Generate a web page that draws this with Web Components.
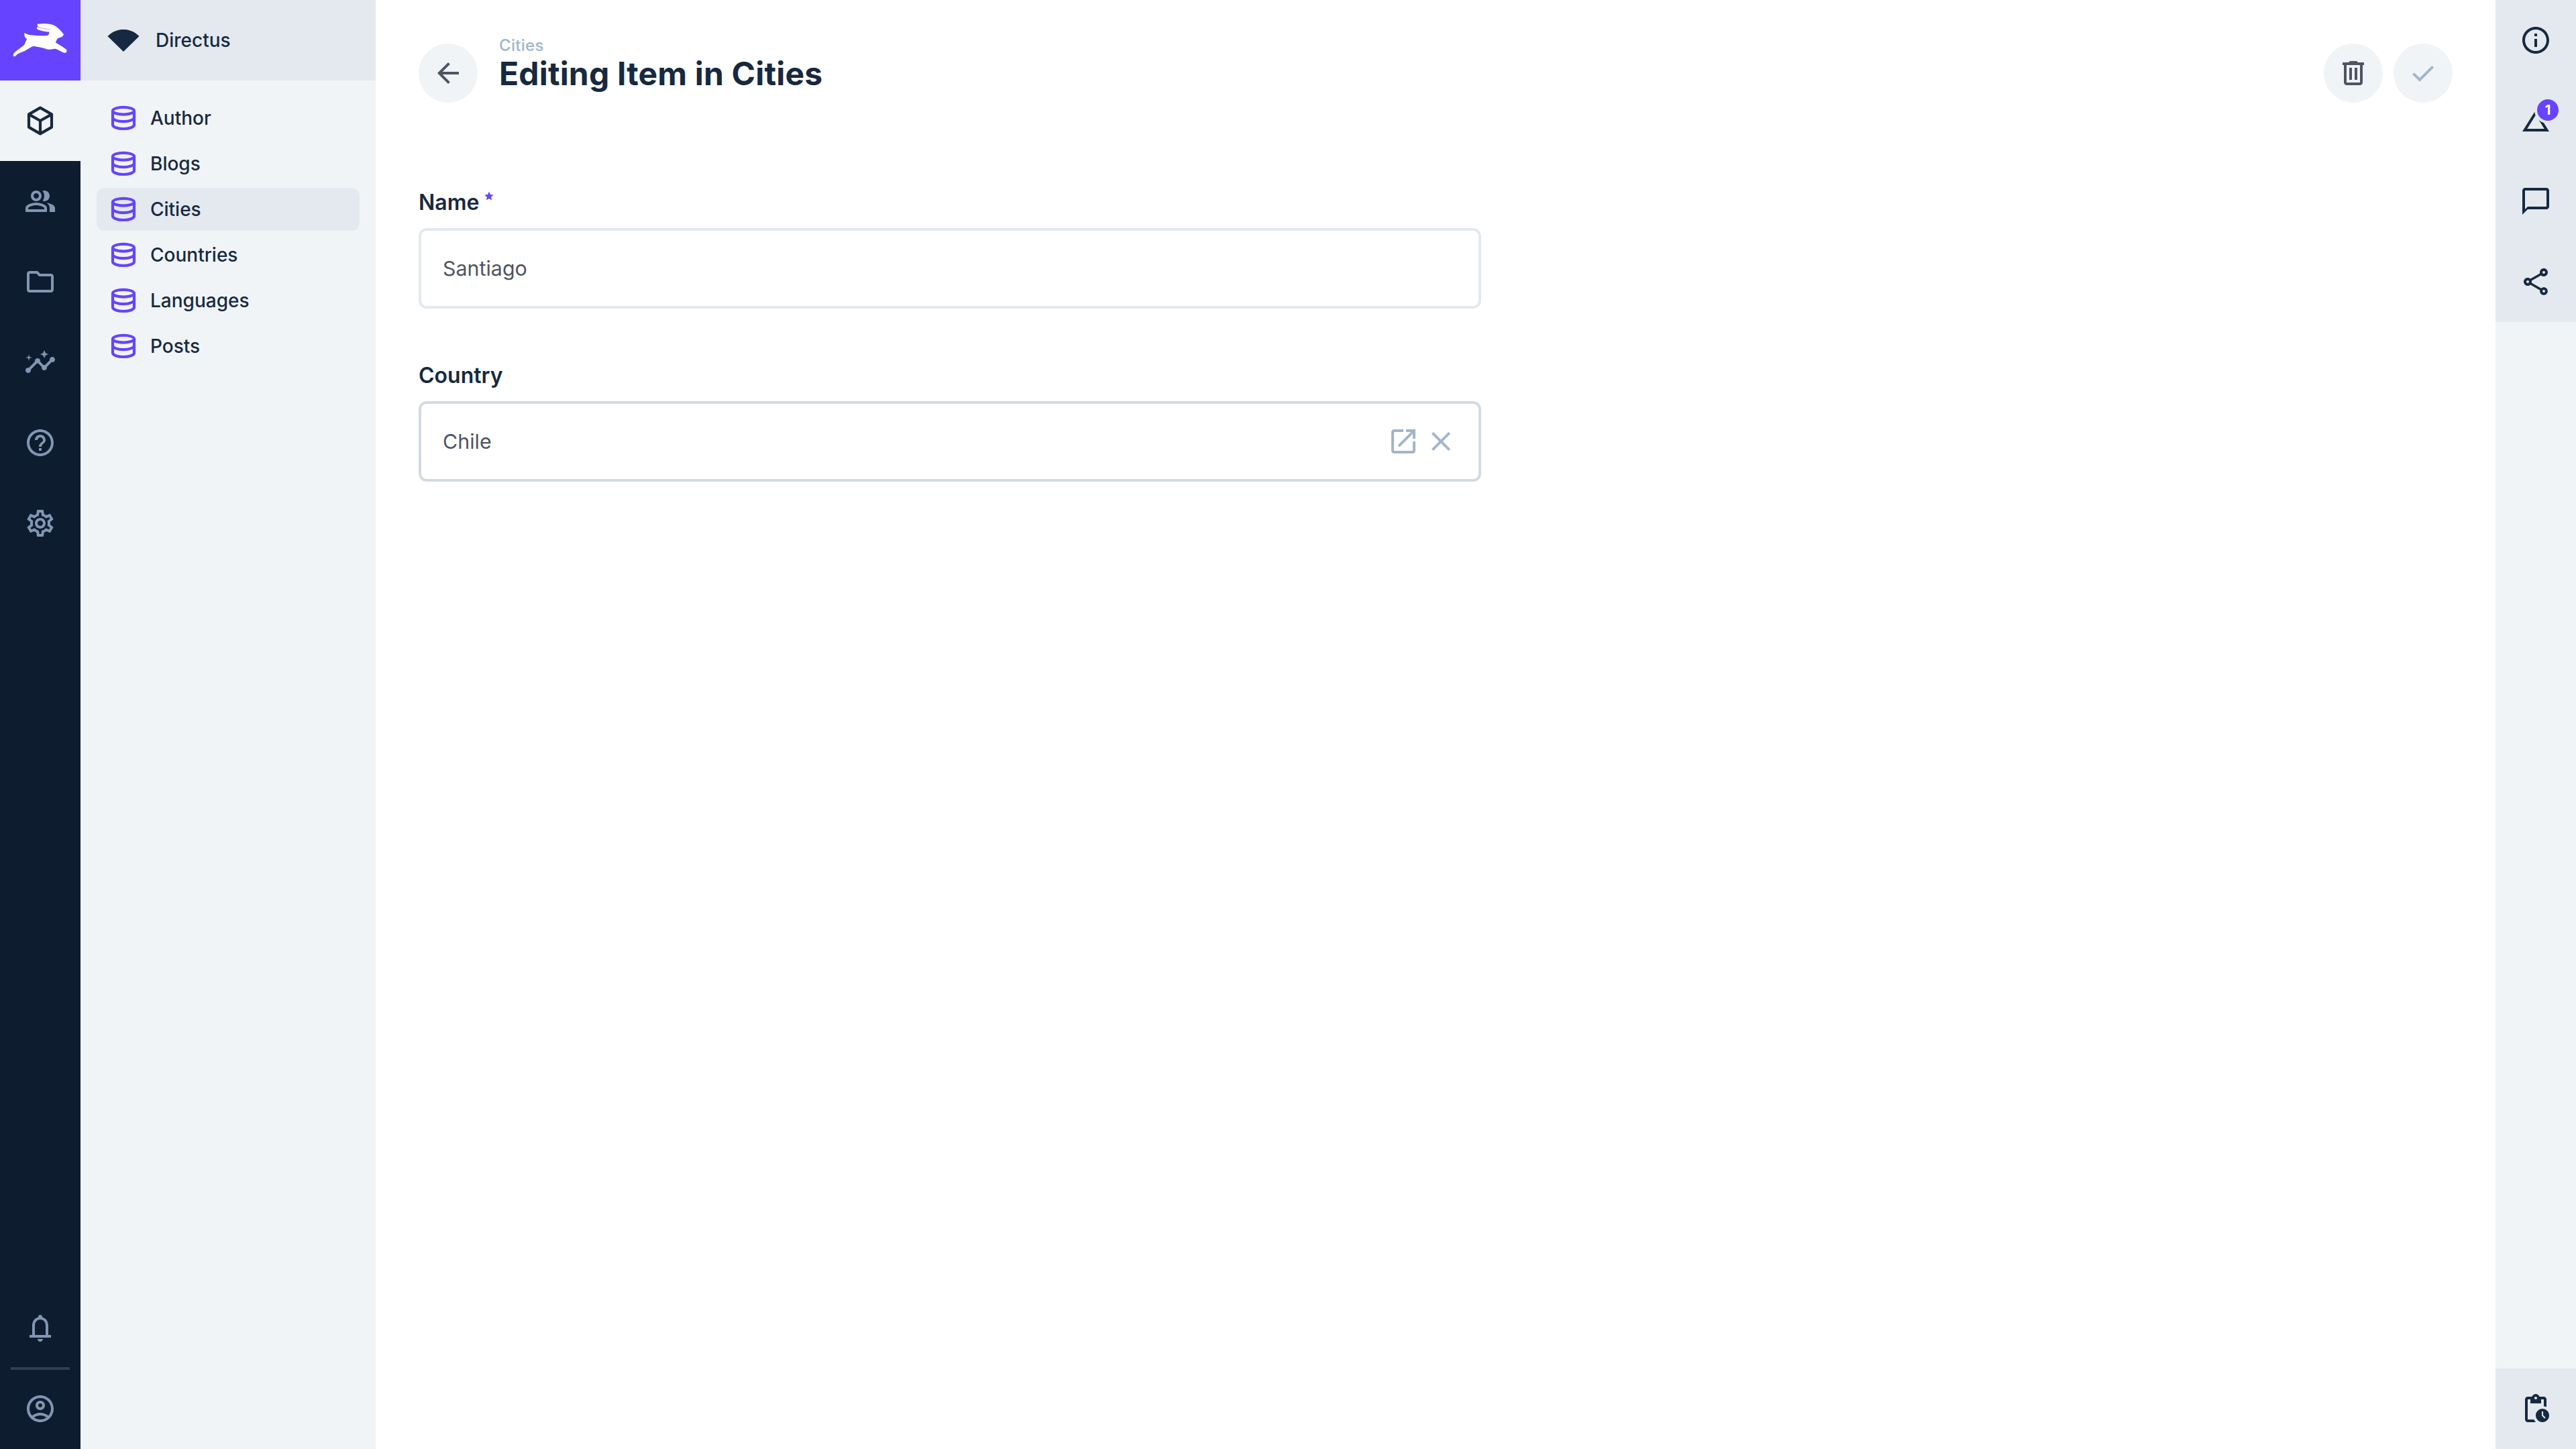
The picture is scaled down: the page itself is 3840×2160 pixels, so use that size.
<!doctype html>
<html lang="en">
<head>
<meta charset="utf-8">
<title>Editing Item in Cities</title>
<style>
  html, body { margin: 0; height: 100%; }
  body { font-family: Inter, "Noto Sans", sans-serif; color: #172940; background: #fff; }
</style>
</head>
<body>
<dx-app></dx-app>
<script>
const ICONS = {
  cube: '<path fill="none" stroke="currentColor" stroke-width="2.1" stroke-linejoin="round" d="M12 2.300 20.500 7.200v9.600L12 21.700 3.500 16.800V7.200zM3.500 7.200 12 12l8.500-4.800M12 12v9.700"/>',
  people: '<path d="M16.67 13.13C18.04 14.06 19 15.32 19 17v3h4v-3c0-2.18-3.57-3.47-6.33-3.87zM15 12c2.21 0 4-1.79 4-4s-1.79-4-4-4c-.47 0-.91.1-1.33.24C14.5 5.27 15 6.58 15 8s-.5 2.73-1.33 3.76c.42.14.86.24 1.33.24zM9 12c2.21 0 4-1.79 4-4s-1.79-4-4-4-4 1.79-4 4 1.79 4 4 4zm0-6c1.1 0 2 .9 2 2s-.9 2-2 2-2-.9-2-2 .9-2 2-2zM9 13c-2.67 0-8 1.34-8 4v3h16v-3c0-2.66-5.33-4-8-4zm6 5H3v-.99C3.2 16.29 6.3 15 9 15s5.8 1.29 6 2v1z"/>',
  folder: '<path d="M9.17 6l2 2H20v10H4V6h5.17M10 4H4c-1.1 0-1.99.9-1.99 2L2 18c0 1.1.9 2 2 2h16c1.1 0 2-.9 2-2V8c0-1.1-.9-2-2-2h-8l-2-2z"/>',
  insights: '<path d="M21 8c-1.45 0-2.26 1.44-1.93 2.51l-3.55 3.56c-.3-.09-.74-.09-1.04 0l-2.55-2.55C12.27 10.45 11.46 9 10 9c-1.45 0-2.27 1.44-1.93 2.52l-4.56 4.55C2.44 15.74 1 16.55 1 18c0 1.1.9 2 2 2 1.45 0 2.26-1.44 1.93-2.51l4.55-4.56c.3.09.74.09 1.04 0l2.55 2.55C12.73 16.55 13.54 18 15 18c1.45 0 2.27-1.44 1.93-2.52l3.56-3.55c1.07.33 2.51-.48 2.51-1.93 0-1.1-.9-2-2-2zM15 9l.94-2.07L18 6l-2.06-.93L15 3l-.92 2.07L12 6l2.08.93zM3.5 11 4 9l2-.5L4 8l-.5-2L3 8l-2 .5L3 9z"/>',
  help: '<path d="M11 18h2v-2h-2v2zm1-16C6.48 2 2 6.48 2 12s4.48 10 10 10 10-4.48 10-10S17.52 2 12 2zm0 18c-4.41 0-8-3.59-8-8s3.59-8 8-8 8 3.59 8 8-3.59 8-8 8zm0-14c-2.21 0-4 1.79-4 4h2c0-1.1.9-2 2-2s2 .9 2 2c0 2-3 1.75-3 5h2c0-2.25 3-2.5 3-5 0-2.21-1.79-4-4-4z"/>',
  settings: '<path d="M19.43 12.98c.04-.32.07-.64.07-.98 0-.34-.03-.66-.07-.98l2.11-1.65c.19-.15.24-.42.12-.64l-2-3.46c-.09-.16-.26-.25-.44-.25-.06 0-.12.01-.17.03l-2.49 1c-.52-.4-1.08-.73-1.69-.98l-.38-2.65C14.46 2.18 14.25 2 14 2h-4c-.25 0-.46.18-.49.42l-.38 2.65c-.61.25-1.17.59-1.69.98l-2.49-1c-.06-.02-.12-.03-.18-.03-.17 0-.34.09-.43.25l-2 3.46c-.13.22-.07.49.12.64l2.11 1.65c-.04.32-.07.65-.07.98 0 .33.03.66.07.98l-2.11 1.65c-.19.15-.24.42-.12.64l2 3.46c.09.16.26.25.44.25.06 0 .12-.01.17-.03l2.49-1c.52.4 1.08.73 1.69.98l.38 2.65c.03.24.24.42.49.42h4c.25 0 .46-.18.49-.42l.38-2.65c.61-.25 1.17-.59 1.69-.98l2.49 1c.06.02.12.03.18.03.17 0 .34-.09.43-.25l2-3.46c.12-.22.07-.49-.12-.64l-2.11-1.65zm-1.98-1.71c.04.31.05.52.05.73 0 .21-.02.43-.05.73l-.14 1.13.89.7 1.08.84-.7 1.21-1.27-.51-1.04-.42-.9.68c-.43.32-.84.56-1.25.73l-1.06.43-.16 1.13-.2 1.35h-1.4l-.19-1.35-.16-1.13-1.06-.43c-.43-.18-.83-.41-1.23-.71l-.91-.7-1.06.43-1.27.51-.7-1.21 1.08-.84.89-.7-.14-1.13c-.03-.31-.05-.54-.05-.74s.02-.43.05-.73l.14-1.13-.89-.7-1.08-.84.7-1.21 1.27.51 1.04.42.9-.68c.43-.32.84-.56 1.25-.73l1.06-.43.16-1.13.2-1.35h1.39l.19 1.35.16 1.13 1.06.43c.43.18.83.41 1.23.71l.91.7 1.06-.43 1.27-.51.7 1.21-1.07.85-.89.7.14 1.13zM12 8c-2.21 0-4 1.79-4 4s1.79 4 4 4 4-1.79 4-4-1.79-4-4-4zm0 6c-1.1 0-2-.9-2-2s.9-2 2-2 2 .9 2 2-.9 2-2 2z"/>',
  bell: '<path fill-rule="evenodd" d="M12 2c-.8 0-1.5.6-1.5 1.4v.4C7.7 4.5 6 7 6 10v7H4v2h16v-2h-2v-7c0-3-1.7-5.5-4.5-6.2v-.4C13.5 2.6 12.8 2 12 2zM8 17v-7c0-2.5 1.5-4.5 4-4.5s4 2 4 4.5v7H8z"/><path d="M10 20h4c0 1.1-.9 2-2 2s-2-.9-2-2z"/>',
  user: '<path d="M12 2C6.48 2 2 6.48 2 12s4.48 10 10 10 10-4.48 10-10S17.52 2 12 2zM7.35 18.5C8.66 17.56 10.26 17 12 17s3.34.56 4.65 1.5c-1.31.94-2.91 1.5-4.65 1.5s-3.34-.56-4.65-1.5zm10.79-1.38C16.45 15.8 14.32 15 12 15s-4.45.8-6.14 2.12C4.7 15.73 4 13.95 4 12c0-4.42 3.58-8 8-8s8 3.58 8 8c0 1.95-.7 3.73-1.86 5.12zM12 6c-1.93 0-3.5 1.57-3.5 3.5S10.07 13 12 13s3.5-1.57 3.5-3.5S13.93 6 12 6zm0 5c-.83 0-1.5-.67-1.5-1.5S11.17 8 12 8s1.5.67 1.5 1.5S12.83 11 12 11z"/>',
  database: '<g fill="none" stroke="currentColor" stroke-width="2.1"><ellipse cx="12" cy="6.600" rx="8" ry="2.700"/><path d="M4 6.600V17c0 1.700 3.600 3 8 3s8-1.300 8-3V6.600M4 11.500c0 1.700 3.600 3.100 8 3.100s8-1.400 8-3.100"/></g>',
  back: '<path d="M20 11H7.83l5.59-5.59L12 4l-8 8 8 8 1.41-1.41L7.83 13H20v-2z"/>',
  trash: '<path fill-rule="evenodd" d="M9.500 3h5l1 1H20v2h-1v13c0 1.100-.9 2-2 2H7c-1.100 0-2-.9-2-2V6H4V4h4.500zM7 6v13h10V6H7z"/><path d="M9 8h2v9H9zM13 8h2v9h-2z"/>',
  check: '<path fill="none" stroke="currentColor" stroke-width="2" d="M4.700 12.300 9.500 17 19.300 7.200"/>',
  open: '<path d="M19 19H5V5h7V3H5c-1.110 0-2 .9-2 2v14c0 1.100.89 2 2 2h14c1.100 0 2-.9 2-2v-7h-2v7zM14 3v2h3.590l-9.830 9.830 1.410 1.410L19 6.410V10h2V3h-7z"/>',
  close: '<path d="M19 6.410 17.590 5 12 10.590 6.410 5 5 6.410 10.590 12 5 17.590 6.410 19 12 13.410 17.590 19 19 17.590 13.410 12z"/>',
  info: '<path d="M11 7h2v2h-2zm0 4h2v6h-2zm1-9C6.480 2 2 6.480 2 12s4.480 10 10 10 10-4.480 10-10S17.520 2 12 2zm0 18c-4.410 0-8-3.590-8-8s3.590-8 8-8 8 3.590 8 8-3.590 8-8 8z"/>',
  history: '<path d="M12 7.770 18.390 18H5.610L12 7.770M12 4 2 20h20L12 4z"/>',
  chat: '<path d="M20 2H4c-1.100 0-2 .9-2 2v18l4-4h14c1.100 0 2-.9 2-2V4c0-1.100-.9-2-2-2zm0 14H6l-2 2V4h16v12z"/>',
  share: '<path d="M18 16.080c-.76 0-1.440.3-1.960.77L8.910 12.700c.05-.23.09-.46.09-.7s-.04-.47-.09-.7l7.050-4.110c.54.5 1.250.81 2.040.81 1.660 0 3-1.340 3-3s-1.340-3-3-3-3 1.340-3 3c0 .24.04.47.09.7L8.040 9.810C7.500 9.310 6.790 9 6 9c-1.660 0-3 1.340-3 3s1.340 3 3 3c.79 0 1.500-.31 2.040-.81l7.120 4.160c-.05.21-.08.43-.08.65 0 1.610 1.310 2.920 2.920 2.920 1.610 0 2.920-1.310 2.920-2.920s-1.310-2.920-2.920-2.920zM18 4c.55 0 1 .45 1 1s-.45 1-1 1-1-.45-1-1 .45-1 1-1zM6 13c-.55 0-1-.45-1-1s.45-1 1-1 1 .45 1 1-.45 1-1 1zm12 7.020c-.55 0-1-.45-1-1s.45-1 1-1 1 .45 1 1-.45 1-1 1z"/>',
  pending: '<path d="M17 12c-2.760 0-5 2.240-5 5s2.240 5 5 5 5-2.240 5-5-2.240-5-5-5zm1.650 7.350L16.500 17.200V14h1v2.790l1.850 1.850-.7.71zM18 3h-3.180C14.400 1.840 13.300 1 12 1s-2.400.84-2.820 2H6c-1.100 0-2 .9-2 2v15c0 1.100.9 2 2 2h6.110c-.59-.57-1.070-1.250-1.420-2H6V5h2v3h8V5h2v5.080c.71.1 1.380.31 2 .6V5c0-1.100-.9-2-2-2zm-6 2c-.55 0-1-.45-1-1s.45-1 1-1 1 .45 1 1-.45 1-1 1z"/>',
};

class DxIcon extends HTMLElement {
  connectedCallback() {
    this.attachShadow({ mode: 'open' });
    const name = this.getAttribute('name');
    this.shadowRoot.innerHTML = `
      <style>
        :host { display: block; width: 48px; height: 48px; flex: none; }
        svg { display: block; width: 100%; height: 100%; fill: currentColor; }
      </style>
      <svg viewBox="0 0 24 24" aria-hidden="true">${ICONS[name] || ''}</svg>
    `;
  }
}
customElements.define('dx-icon', DxIcon);

class DxModuleItem extends HTMLElement {
  connectedCallback() {
    this.attachShadow({ mode: 'open' });
    this.shadowRoot.innerHTML = `
      <style>
        :host { display: flex; width: 120px; height: 120px; align-items: center; justify-content: center; color: #8196b1; }
        :host([active]) { background: #f0f4f7; color: #172940; }
      </style>
      <dx-icon name="${this.getAttribute('icon')}"></dx-icon>
    `;
  }
}
customElements.define('dx-module-item', DxModuleItem);

class DxModuleBar extends HTMLElement {
  connectedCallback() {
    this.attachShadow({ mode: 'open' });
    this.shadowRoot.innerHTML = `
      <style>
        :host { display: flex; flex-direction: column; height: 100%; background: #0e1c2f; }
        .logo { height: 120px; background: #6644ff; flex: none; }
        .logo svg { display: block; width: 120px; height: 120px; }
        .spacer { flex: 1; }
        .rule { height: 4px; margin: -2px 16px; background: #2f3f58; position: relative; }
      </style>
      <div class="logo">
        <svg viewBox="0 0 120 120" aria-hidden="true">
          <path fill="#fff" stroke="#fff" stroke-width="1.400" stroke-linejoin="round" d="M20.500 83C19.500 81 21 79.500 24 77L32 71C36 69 38 66 39 62L41 58C38 56 36.500 54 37 50C39 51 42 53 46 53C55 54 64 54.500 71 53.500C73 53 74 50 74.500 47C69 47 58 45 55.500 42.500C55 41 57 40.500 59 41C57 39 55.500 37.500 56.500 36.500C62 35.500 72 35.500 78 37.500C85 40 90 46 94 51C94.500 53 92 55 88 55.500C86 56 85 57 84 59C83 61 82 63 82.500 64C86 66 93 70 98 74C100 76 98.500 78.500 96 78C91 76.500 87 73 83 72C79 71.500 76 73.500 72 73C69 73 68 71.500 65 71C60 70 55 68.500 50 68C46 69 41 73 37 75C33 77 28 78 24.500 81C23 83 21.500 84 20.500 83Z"/>
          <path fill="none" stroke="#b9a8ff" stroke-width="1" d="M57 41C63 42 69 43.500 75 44"/>
        </svg>
      </div>
      <dx-module-item icon="cube" active></dx-module-item>
      <dx-module-item icon="people"></dx-module-item>
      <dx-module-item icon="folder"></dx-module-item>
      <dx-module-item icon="insights"></dx-module-item>
      <dx-module-item icon="help"></dx-module-item>
      <dx-module-item icon="settings"></dx-module-item>
      <div class="spacer"></div>
      <dx-module-item icon="bell"></dx-module-item>
      <div class="rule"></div>
      <dx-module-item icon="user"></dx-module-item>
    `;
  }
}
customElements.define('dx-module-bar', DxModuleBar);

class DxNavItem extends HTMLElement {
  connectedCallback() {
    this.attachShadow({ mode: 'open' });
    this.shadowRoot.innerHTML = `
      <style>
        :host { display: flex; align-items: center; height: 64px; padding: 0 16px; gap: 16px; border-radius: 12px; color: #172940; font-size: 28px; font-weight: 500; }
        :host([active]) { background: #e3e9ef; }
        dx-icon { color: #6644ff; }
      </style>
      <dx-icon name="database"></dx-icon>
      <slot></slot>
    `;
  }
}
customElements.define('dx-nav-item', DxNavItem);

class DxNavSidebar extends HTMLElement {
  connectedCallback() {
    this.attachShadow({ mode: 'open' });
    this.shadowRoot.innerHTML = `
      <style>
        :host { display: flex; flex-direction: column; height: 100%; background: #f0f4f7; }
        header { display: flex; align-items: center; height: 120px; flex: none; padding-left: 40px; gap: 24px; background: #e3e9ef; font-size: 28px; font-weight: 500; color: #172940; }
        svg { display: block; width: 48px; height: 48px; flex: none; }
        nav { display: flex; flex-direction: column; gap: 4px; padding: 24px; }
      </style>
      <header>
        <svg viewBox="0 0 48 48" aria-hidden="true"><path fill="#172940" d="M.5 18C8 10.500 16 8 24 8s16 2.500 23.500 10L24 41Z"/></svg>
        <span>Directus</span>
      </header>
      <nav><slot></slot></nav>
    `;
  }
}
customElements.define('dx-nav-sidebar', DxNavSidebar);

class DxRoundButton extends HTMLElement {
  connectedCallback() {
    this.attachShadow({ mode: 'open' });
    this.shadowRoot.innerHTML = `
      <style>
        :host { display: flex; width: 88px; height: 88px; flex: none; align-items: center; justify-content: center; border-radius: 50%; background: #f0f4f7; color: #4f5464; }
        :host([disabled]) { color: #a2b5cd; }
      </style>
      <dx-icon name="${this.getAttribute('icon')}"></dx-icon>
    `;
  }
}
customElements.define('dx-round-button', DxRoundButton);

class DxHeaderBar extends HTMLElement {
  connectedCallback() {
    this.attachShadow({ mode: 'open' });
    this.shadowRoot.innerHTML = `
      <style>
        :host { display: flex; align-items: flex-start; padding: 65px 64px 0; }
        .titles { margin: -11px 0 0 32px; flex: 1; }
        .crumb { font-size: 24px; line-height: 28px; color: #a2b5cd; font-weight: 500; letter-spacing: .3px; }
        h1 { margin: 0; font-size: 48px; line-height: 56px; font-weight: 700; color: #172940; letter-spacing: .17px; }
        .actions { display: flex; gap: 16px; }
      </style>
      <dx-round-button icon="back"></dx-round-button>
      <div class="titles">
        <div class="crumb">${this.getAttribute('crumb')}</div>
        <h1>${this.getAttribute('heading')}</h1>
      </div>
      <div class="actions"><slot></slot></div>
    `;
  }
}
customElements.define('dx-header-bar', DxHeaderBar);

class DxField extends HTMLElement {
  connectedCallback() {
    this.attachShadow({ mode: 'open' });
    const required = this.hasAttribute('required');
    this.shadowRoot.innerHTML = `
      <style>
        :host { display: block; width: 1584px; }
        .label { display: flex; height: 40px; margin-bottom: 18px; font-size: 32px; line-height: 40px; font-weight: 600; color: #172940; }
        .label svg { width: 14px; height: 14px; margin: 3px 0 0 8px; fill: #6644ff; }
        .box { display: flex; align-items: center; gap: 8px; box-sizing: border-box; height: 120px; padding: 0 32px; border: 4px solid #e3e9ef; border-radius: 12px; background: #fff; font-size: 30.400px; color: #4f5464; }
        :host([strong]) .box { border-color: #d3dae4; }
        .value { flex: 1; }
        ::slotted(dx-icon) { color: #a2b5cd; }
      </style>
      <div class="label">
        <span>${this.getAttribute('label')}</span>
        ${required ? '<svg viewBox="0 0 24 24" aria-hidden="true"><path d="M12 1l3.300 7.700 8.300.7-6.300 5.500 1.900 8.100L12 18.700 4.800 23l1.900-8.100L.4 9.400l8.300-.7z"/></svg>' : ''}
      </div>
      <div class="box">
        <span class="value">${this.getAttribute('value')}</span>
        <slot></slot>
      </div>
    `;
  }
}
customElements.define('dx-field', DxField);

class DxInfoSidebar extends HTMLElement {
  connectedCallback() {
    this.attachShadow({ mode: 'open' });
    this.shadowRoot.innerHTML = `
      <style>
        :host { display: flex; flex-direction: column; height: 100%; background: #f0f4f7; color: #172940; }
        .group { background: #e3e9ef; }
        .spacer { flex: 1; }
        .row { display: flex; width: 120px; height: 120px; align-items: center; justify-content: center; position: relative; }
        .badge { position: absolute; left: 62px; top: 28px; width: 32px; height: 32px; border-radius: 50%; background: #6644ff; box-shadow: 0 0 0 4px #e3e9ef; color: #fff; font-size: 20px; font-weight: 700; line-height: 32px; text-align: center; }
      </style>
      <div class="group">
        <div class="row"><dx-icon name="info"></dx-icon></div>
        <div class="row"><dx-icon name="history"></dx-icon><span class="badge">1</span></div>
        <div class="row"><dx-icon name="chat"></dx-icon></div>
        <div class="row"><dx-icon name="share"></dx-icon></div>
      </div>
      <div class="spacer"></div>
      <div class="group">
        <div class="row"><dx-icon name="pending"></dx-icon></div>
      </div>
    `;
  }
}
customElements.define('dx-info-sidebar', DxInfoSidebar);

class DxApp extends HTMLElement {
  connectedCallback() {
    this.attachShadow({ mode: 'open' });
    const collections = ['Author', 'Blogs', 'Cities', 'Countries', 'Languages', 'Posts'];
    this.shadowRoot.innerHTML = `
      <style>
        :host { display: grid; grid-template-columns: 120px 440px 1fr 120px; height: 100vh; overflow: hidden; }
        main { min-width: 0; background: #fff; }
        form { display: flex; flex-direction: column; gap: 80px; padding: 129px 0 0 64px; }
      </style>
      <dx-module-bar></dx-module-bar>
      <dx-nav-sidebar>
        ${collections
          .map((name) => `<dx-nav-item ${name === 'Cities' ? 'active' : ''}>${name}</dx-nav-item>`)
          .join('')}
      </dx-nav-sidebar>
      <main>
        <dx-header-bar crumb="Cities" heading="Editing Item in Cities">
          <dx-round-button icon="trash"></dx-round-button>
          <dx-round-button icon="check" disabled></dx-round-button>
        </dx-header-bar>
        <form>
          <dx-field label="Name" value="Santiago" required></dx-field>
          <dx-field label="Country" value="Chile" strong>
            <dx-icon name="open"></dx-icon>
            <dx-icon name="close"></dx-icon>
          </dx-field>
        </form>
      </main>
      <dx-info-sidebar></dx-info-sidebar>
    `;
  }
}
customElements.define('dx-app', DxApp);
</script>
</body>
</html>
